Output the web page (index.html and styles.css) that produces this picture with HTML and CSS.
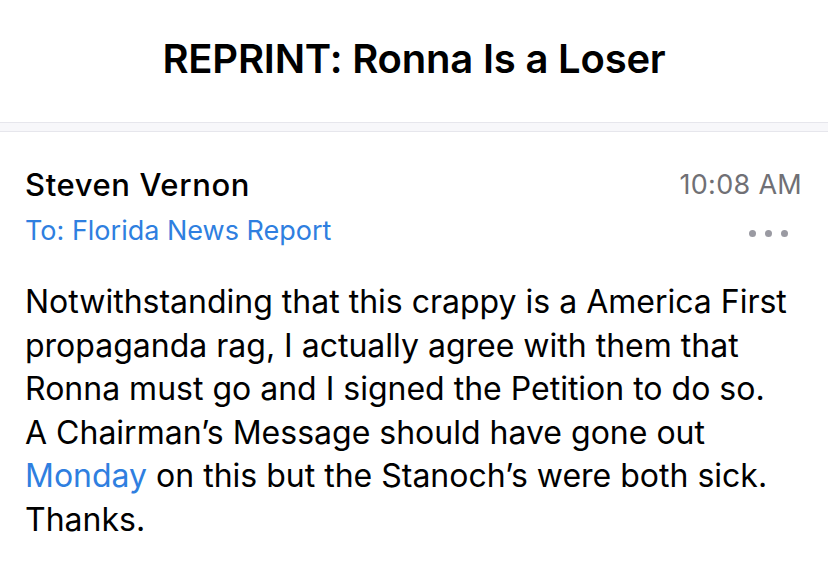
FILE: index.html
```html
<!DOCTYPE html>
<html>
<head>
<meta charset="utf-8">
<link rel="stylesheet" href="styles.css">
</head>
<body>
<header class="title-bar">
  <h1 class="title">REPRINT: Ronna Is a Loser</h1>
</header>
<div class="band"></div>
<main class="message">
  <div class="meta">
    <div class="meta-row">
      <span class="sender">Steven Vernon</span>
      <span class="time">10:08 AM</span>
    </div>
    <div class="meta-row">
      <span class="to">To: Florida News Report</span>
      <span class="more"><i></i><i></i><i></i></span>
    </div>
  </div>
  <p class="body">Notwithstanding that this crappy is a America First<br>propaganda rag, I actually agree with them that<br>Ronna must go and I signed the Petition to do so.<br>A Chairman’s Message should have gone out<br><span class="link">Monday</span> on this but the Stanoch’s were both sick.<br>Thanks.</p>
</main>
</body>
</html>
```

FILE: styles.css
```css
html, body {
  margin: 0;
  padding: 0;
  background: #ffffff;
  width: 828px;
  height: 584px;
  overflow: hidden;
  font-family: Inter, Roboto, "Liberation Sans", sans-serif;
  color: #000;
}
.title-bar {
  height: 122px;
  display: flex;
  align-items: center;
  justify-content: center;
}
.title {
  margin: 0;
  padding-bottom: 6px;
  font-size: 40px;
  font-weight: 600;
  letter-spacing: -0.2px;
}
.band {
  height: 8px;
  background: #f7f7fa;
  border-top: 1px solid #e6e6ec;
  border-bottom: 1px solid #e6e6ec;
}
.message {
  padding: 31px 26px 0 25px;
}
.meta {
  display: flex;
  flex-direction: column;
}
.meta-row {
  display: flex;
  justify-content: space-between;
  align-items: center;
}
.sender {
  font-size: 31px;
  font-weight: 500;
  line-height: 44px;
  letter-spacing: 0.6px;
}
.time {
  font-size: 27px;
  color: #707075;
  line-height: 44px;
  letter-spacing: 0.3px;
}
.to {
  font-size: 27px;
  color: #2f7fe0;
  line-height: 48px;
}
.more {
  display: flex;
  gap: 9px;
  padding-right: 14px;
  padding-top: 4px;
}
.more i {
  display: block;
  width: 7px;
  height: 7px;
  border-radius: 50%;
  background: #9a9aa2;
}
.body {
  margin: 25px 0 0 0;
  font-size: 32px;
  line-height: 43.6px;
  white-space: nowrap;
}
.link {
  color: #2f7fe0;
}
```
